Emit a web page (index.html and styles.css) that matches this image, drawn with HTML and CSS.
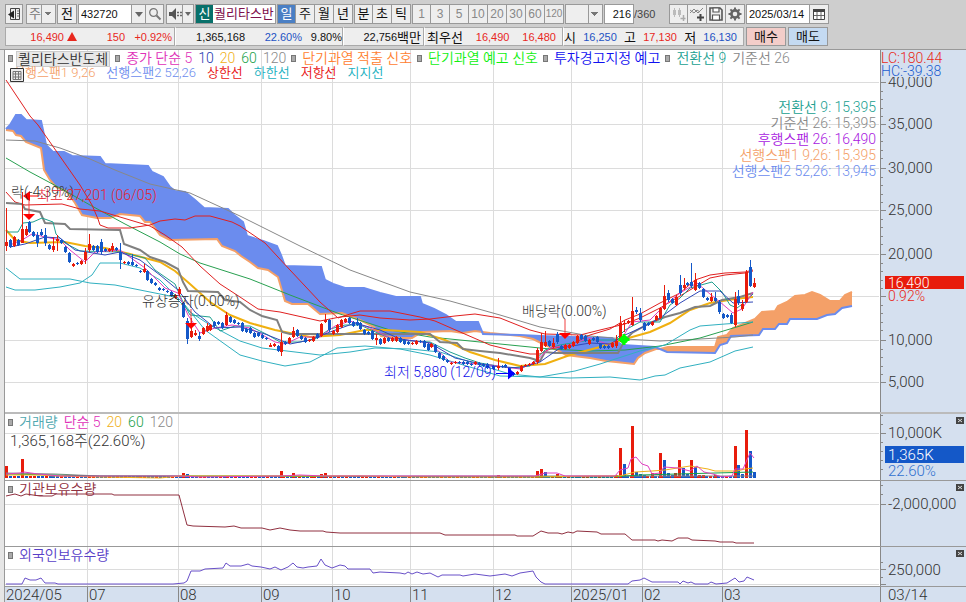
FILE: index.html
```
<!DOCTYPE html>
<html lang="ko">

<head>
  <meta charset="UTF-8">
  <meta name="viewport" content="width=device-width, initial-scale=1.0">
  <title>퀄리타스반도체 차트</title>
  <link rel="stylesheet" href="styles.css">
</head>

<body>
  <header class="toolbar">
    <button class="btn" type="button" aria-label="메뉴 접기">
      <svg width="14" height="14" viewBox="0 0 14 14"><path d="M3.500 1.500h9v11h-9z" fill="#eee" stroke="#444"/><path d="M8 1h1v12H8z" fill="#444"/><path d="M10 4h2M10 6.500h2M10 9h2" stroke="#777"/><path d="M7 3.500v8l-6-4z" fill="#222"/></svg>
    </button>
    <select class="select period" aria-label="종목 구분"><option>주</option></select>
    <button class="btn before" type="button">전</button>
    <div class="group">
      <input class="field code" type="text" value="432720" aria-label="종목코드">
      <button class="btn slim" type="button" aria-label="종목 목록"><span class="arrow"></span></button>
      <button class="btn" type="button" aria-label="검색">
        <svg width="14" height="14" viewBox="0 0 14 14"><circle cx="5.500" cy="5.500" r="3.800" fill="none" stroke="#777" stroke-width="1.300"/><path d="M8.500 8.500l4 4" stroke="#777" stroke-width="2"/></svg>
      </button>
    </div>
    <div class="group sound-group">
      <button class="btn sound" type="button" aria-label="소리">
        <svg width="14" height="14" viewBox="0 0 14 14"><path d="M1 5h3l4-4v12L4 9H1z" fill="#555"/><path d="M9 5.500h2M12 5.500h2M9 8.500h2M12 8.500h2" stroke="#666" stroke-width="1.500"/></svg>
      </button>
      <button class="btn tiny" type="button" aria-label="소리 설정"><span class="arrow"></span></button>
    </div>
    <div class="stock"><span class="badge">신</span><span class="stock-name">퀄리타스반</span></div>
    <div class="group">
      <button class="btn wide active" type="button">일</button>
      <button class="btn wide" type="button">주</button>
      <button class="btn wide" type="button">월</button>
      <button class="btn wide" type="button">년</button>
    </div>
    <div class="group">
      <button class="btn wide" type="button">분</button>
      <button class="btn wide" type="button">초</button>
      <button class="btn wide" type="button">틱</button>
    </div>
    <div class="group minutes">
      <button class="btn wide" type="button">1</button>
      <button class="btn wide" type="button">3</button>
      <button class="btn wide" type="button">5</button>
      <button class="btn wide" type="button">10</button>
      <button class="btn wide" type="button">20</button>
      <button class="btn wide" type="button">30</button>
      <button class="btn wide" type="button">60</button>
      <button class="btn wide small" type="button">120</button>
    </div>
    <select class="select unit" aria-label="사용자 주기" disabled><option></option></select>
    <div class="count">
      <input class="field bars" type="text" value="216" aria-label="봉 개수"><span>/360</span>
    </div>
    <div class="group">
      <button class="btn wide" type="button" aria-label="봉 추가" disabled>
        <svg width="16" height="16" viewBox="0 0 16 16"><path d="M3.500 2v9M8.500 2v9" stroke="#bbb"/><path d="M2 4h3v5H2zM7 4h3v5H7z" fill="#bbb"/><path d="M12.500 9v6M9.500 12.500h5" stroke="#aaa" stroke-width="1.500"/></svg>
      </button>
      <button class="btn wide" type="button" aria-label="지표 추가">
        <svg width="16" height="16" viewBox="0 0 16 16"><path d="M1 7l4-4 4 4 5-5M1 4l4 3 3-3 3 2" fill="none" stroke="#888"/><path d="M11.500 8v7M8 11.500h7" stroke="#444" stroke-width="2"/></svg>
      </button>
      <button class="btn wide" type="button" aria-label="저장">
        <svg width="16" height="16" viewBox="0 0 16 16"><path d="M2 2h10l2 2v10H2z" fill="#eee" stroke="#555" stroke-width="1.600"/><path d="M5 2h6v4H5zM4.500 9h7v5h-7z" fill="#fff" stroke="#555" stroke-width="1.200"/></svg>
      </button>
      <button class="btn wide" type="button" aria-label="설정">
        <svg width="16" height="16" viewBox="0 0 16 16"><circle cx="8" cy="8" r="3.600" fill="none" stroke="#666" stroke-width="2.600"/><path d="M8 1.500v3M8 11.500v3M1.500 8h3M11.500 8h3M3.400 3.400l2 2M10.600 10.600l2 2M3.400 12.600l2-2M10.600 5.400l2-2" stroke="#666" stroke-width="2"/></svg>
      </button>
    </div>
    <div class="group">
      <input class="field date" type="text" value="2025/03/14" aria-label="날짜">
      <button class="btn wide" type="button" aria-label="달력">
        <svg width="14" height="14" viewBox="0 0 14 14"><path d="M1.500 2.500h11v10h-11z" fill="#fff" stroke="#444"/><path d="M1 2h12v3H1z" fill="#444"/><path d="M5 5v7M9 5v7M2 8.500h10" stroke="#666"/></svg>
      </button>
    </div>
  </header>

  <section class="quote">
    <div class="cell cell-price up"><span class="n-price">16,490</span><span class="tri"></span><span class="n-diff">150</span><span class="n-rate">+0.92%</span></div>
    <div class="cell cell-volume"><span class="n-volume">1,365,168</span><span class="n-turn down">22.60%</span><span class="n-rate">9.80%</span></div>
    <div class="cell cell-amount">22,756<b>백만</b></div>
    <div class="cell cell-best"><b>최우선</b><span class="up">16,490</span><span class="up">16,480</span></div>
    <div class="cell cell-ohl"><b>시</b><span class="down">16,250</span><b>고</b><span class="up">17,130</span><b>저</b><span class="down">16,130</span></div>
    <button class="order buy" type="button">매수</button>
    <button class="order sell" type="button">매도</button>
  </section>

  <main class="chart">
    <section class="panel panel-price">
      <svg id="price" viewBox="5 50 961 362"></svg>
      <div class="legend">
        <div class="legend-row">
          <i class="mark"></i><span class="name">퀄리타스반도체</span>
          <i class="mark"></i><span class="c-magenta">종가 단순 5</span><span class="c-navy">10</span><span class="c-gold">20</span><span class="c-green">60</span><span class="c-gray">120</span>
          <i class="mark"></i><span class="c-orange">단기과열 적출 신호</span>
          <i class="mark"></i><span class="c-lime">단기과열 예고 신호</span>
          <i class="mark"></i><span class="c-blue">투자경고지정 예고</span>
          <i class="mark"></i><span class="c-teal">전환선 9</span><span class="c-gray">기준선 26</span>
        </div>
        <div class="legend-row second">
          <span class="c-peach">선행스팬1 9,26</span><span class="c-sky">선행스팬2 52,26</span><span class="c-red">상한선</span><span class="c-cyan">하한선</span><span class="c-red">저항선</span><span class="c-cyan">지지선</span>
        </div>
      </div>
      <button class="table-btn" type="button" aria-label="표 보기">
        <svg width="14" height="14" viewBox="0 0 14 14"><path d="M.5.5h13v13H.5z" fill="#eee" stroke="#333"/><path d="M3 3.500h8v8H3zM5.500 3v9M8.500 3v9M3 6h8M3 9h8" fill="none" stroke="#777"/></svg>
      </button>
      <ul class="values">
        <li class="c-teal">전환선 9: 15,395</li>
        <li class="c-gray">기준선 26: 15,395</li>
        <li class="c-violet">후행스팬 26: 16,490</li>
        <li class="c-peach">선행스팬1 9,26: 15,395</li>
        <li class="c-sky">선행스팬2 52,26: 13,945</li>
      </ul>
    </section>

    <section class="panel">
      <svg id="volume" viewBox="5 414 961 66"></svg>
      <div class="legend">
        <div class="legend-row">
          <i class="mark"></i><span class="c-aqua">거래량</span><span class="c-magenta">단순 5</span><span class="c-gold">20</span><span class="c-green">60</span><span class="c-gray">120</span>
        </div>
        <div class="volume-now">1,365,168주(22.60%)</div>
      </div>
    </section>

    <section class="panel">
      <svg id="inst" viewBox="5 481 961 65"></svg>
      <div class="legend">
        <div class="legend-row"><i class="mark"></i><span class="c-maroon">기관보유수량</span></div>
      </div>
    </section>

    <section class="panel">
      <svg id="foreign" viewBox="5 547 961 39"></svg>
      <div class="legend">
        <div class="legend-row"><i class="mark"></i><span class="c-indigo">외국인보유수량</span></div>
      </div>
    </section>

    <section class="panel panel-axis">
      <svg id="axis" viewBox="5 587 961 15"></svg>
    </section>
  </main>

  <script src="chart.js"></script>
</body>

</html>
```
FILE: styles.css
```
* {
  box-sizing: border-box;
}

body {
  margin: 0;
  min-height: 100vh;
  background-color: #cecece;
  color: #111;
  font-family: "Liberation Sans", "Noto Sans CJK KR", sans-serif;
  font-size: 11px;
  overflow-x: hidden;
}

button,
input,
select {
  font: inherit;
  color: inherit;
  margin: 0;
}

/* Toolbar */
.toolbar {
  display: flex;
  gap: 1px;
  padding: 4px 5px 3px;
}

.group,
.count,
.stock {
  display: flex;
  flex: none;
}

.btn {
  display: flex;
  align-items: center;
  justify-content: center;
  flex: none;
  width: 18px;
  height: 20px;
  padding: 0;
  background-color: #eeeeee;
  border: 1px solid #999;
  font-size: 13px;
  line-height: 16px;
}

.btn.wide {
  width: 19px;
}

.group .btn + .btn {
  border-left-width: 0;
}

.btn.slim {
  width: 14px;
  border-left: none;
}

.btn.tiny {
  width: 11px;
}

.btn.before {
  width: 20px;
}

.btn.active {
  background-color: #4a7fc4;
  color: #fff;
}

.minutes .btn {
  color: #888;
  font-size: 12px;
}

.minutes .small {
  font-size: 10px;
}

.arrow {
  border: 4px solid transparent;
  border-top: 5px solid #666;
  border-bottom: none;
}

.tiny .arrow {
  border-width: 4px 3px 0;
}

.select {
  appearance: none;
  flex: none;
  height: 20px;
  padding: 0 2px;
  border: 1px solid #999;
  border-radius: 0;
  font-size: 13px;
  line-height: 16px;
  color: #777;
  background-color: #eee;
  background-image: linear-gradient(#999, #999), linear-gradient(to bottom left, #777 50%, transparent 50%), linear-gradient(to bottom right, #777 50%, transparent 50%);
  background-repeat: no-repeat;
  background-size: 1px 100%, 4px 4px, 4px 4px;
  background-position: right 13px top, right 7px center, right 3px center;
}

.period {
  width: 30px;
  margin-left: 2px;
}

.unit {
  width: 38px;
  opacity: 1;
}

.field {
  height: 20px;
  padding: 0 2px;
  background-color: #fff;
  border: 1px solid #999;
  border-radius: 0;
}

.code {
  width: 54px;
}

.sound-group {
  margin-left: 1px;
}

.sound {
  width: 17px;
}

.stock {
  width: 81px;
  background-color: #fff;
  border: 1px solid #999;
  overflow: hidden;
  white-space: nowrap;
  font-size: 13px;
  line-height: 18px;
}

.badge {
  width: 17px;
  flex: none;
  text-align: center;
  background-color: #08706a;
  color: #fff;
}

.stock-name {
  padding-left: 1px;
  color: #80104c;
}

.count {
  align-items: center;
  width: 64px;
  color: #444;
}

.bars {
  width: 30px;
  text-align: right;
  color: #111;
}

.date {
  width: 64px;
}

.date + .btn {
  border-left: none;
}

/* Quote line */
.quote {
  display: flex;
  height: 23px;
  padding: 0 5px 3px;
  border-bottom: 1px solid #999;
}

.cell {
  display: flex;
  align-items: center;
  flex: none;
  height: 19px;
  background-color: #eee;
  border: 1px solid #aaa;
  border-left-color: #fff;
  white-space: nowrap;
}

.cell b,
.order {
  font-size: 13px;
  font-weight: 400;
}

.up {
  color: #e8281e;
}

.down {
  color: #2453c4;
}

.cell span {
  text-align: right;
}

.cell-price {
  width: 170px;
  border-left-color: #aaa;
}

.cell-volume {
  width: 168px;
}

.cell-amount {
  width: 81px;
  justify-content: flex-end;
  padding-right: 2px;
}

.cell-best {
  width: 139px;
  padding-left: 2px;
  justify-content: space-between;
  padding-right: 6px;
}

.cell-ohl {
  width: 181px;
  justify-content: space-between;
  padding-right: 6px;
}

.n-price {
  width: 58px;
}

.tri {
  margin-left: 3px;
  border: 5px solid transparent;
  border-top: none;
  border-bottom: 9px solid #e8281e;
}

.n-diff {
  width: 48px;
}

.n-rate {
  width: 47px;
}

.n-volume {
  width: 69px;
}

.n-turn {
  width: 57px;
}

.cell-volume .n-rate {
  width: 40px;
}

.order {
  flex: none;
  width: 40px;
  height: 19px;
  margin-left: 2px;
  padding: 0;
  border: 1px solid #999;
  line-height: 16px;
}

.buy {
  background-color: #f3cdc9;
}

.sell {
  background-color: #c4daf2;
}

/* Chart */
.chart {
  margin-left: 4px;
  border-left: 1px solid #999;
  box-shadow: -4px 0 #e6e6e6;
  background-color: #fff;
  font-family: Roboto, "Noto Sans CJK KR", sans-serif;
  font-size: 14px;
}

.panel {
  display: grid;
  border-bottom: 1px solid #999;
}

.panel-price {
  border-bottom: 2px solid #bbb;
}

.panel-axis {
  border-bottom: none;
}

.panel > * {
  grid-area: 1 / 1;
}

.panel > svg {
  display: block;
  width: 100%;
  height: auto;
}

.legend {
  height: 0;
  padding: 1px 0 0 3px;
  font-weight: 350;
  white-space: nowrap;
}

.legend-row {
  display: flex;
  align-items: center;
  gap: 6px;
  height: 15px;
  line-height: 15px;
}

.second {
  padding-left: 5px;
  gap: 11px;
  height: 12px;
  font-size: 13px;
}

.mark {
  flex: none;
  width: 5px;
  height: 7px;
  margin-left: -1px;
  background-color: #aaa;
  border: 1px solid #777;
}

.mark:first-child {
  margin-left: 0;
}

.name {
  margin-left: -3px;
  padding: 0 1px;
  background-color: #e8e8e8;
  border: 1px solid #ccc;
  line-height: 14px;
  color: #333;
}

.table-btn {
  align-self: start;
  justify-self: start;
  margin: 18px 0 0 5px;
  padding: 0;
  height: 14px;
  border: none;
  background: none;
}

.table-btn svg {
  display: block;
}

.values {
  align-self: start;
  justify-self: end;
  margin: 49px 90px 0 0;
  padding: 0;
  list-style: none;
  text-align: right;
  font-weight: 350;
  line-height: 16px;
}

.volume-now {
  padding-left: 2px;
  font-size: 15px;
  font-weight: 300;
  line-height: 22px;
  color: #333;
}

.c-magenta { color: #e030b8; }
.c-navy { color: #2438b0; }
.c-gold { color: #f0b018; }
.c-green { color: #18a048; }
.c-gray { color: #888888; }
.c-orange { color: #ff8030; }
.c-lime { color: #10f010; }
.c-blue { color: #1010f0; }
.c-teal { color: #20a090; }
.c-peach { color: #f4a068; }
.c-sky { color: #6b8cee; }
.c-red { color: #e81010; }
.c-cyan { color: #18b0c0; }
.c-violet { color: #a818e0; }
.c-aqua { color: #50a8b0; }
.c-maroon { color: #903040; }
.c-indigo { color: #5840c8; }

/* Chart shapes */
.grid { stroke: #dcdcdc; fill: none; shape-rendering: crispEdges; }
.scale-bg { fill: #d5e0ef; }
.tick { stroke: #888; fill: none; shape-rendering: crispEdges; }
.line { fill: none; stroke-width: 1; }
.thick { stroke-width: 2; }
.bar { shape-rendering: crispEdges; }
.scale-text { font-size: 15px; font-weight: 300; }
.note { font-size: 14px; font-weight: 300; }
```
FILE: chart.js
```
const NS = 'http://www.w3.org/2000/svg';
const RED = '#e81c0c';
const BLUE = '#1458c8';
const months = [[87, '07'], [178, '08'], [261, '09'], [332, '10'], [410, '11'], [493, '12'], [571, '2025/01'], [642, '02'], [722, '03']];

function add(svg, tag, attrs, text) {
  const el = document.createElementNS(NS, tag);
  for (const key in attrs) el.setAttribute(key, attrs[key]);
  if (text) el.textContent = text;
  svg.appendChild(el);
}

function line(svg, points, color, thick) {
  add(svg, 'polyline', { points: points, stroke: color, class: thick ? 'line thick' : 'line' });
}

function rect(svg, x, y, w, h, color) {
  add(svg, 'rect', { x: x, y: y, width: w, height: h, fill: color, class: 'bar' });
}

function label(svg, x, y, text, cls, color, anchor) {
  const attrs = { x: x, y: y, class: cls, fill: color || '#333' };
  if (anchor) attrs['text-anchor'] = anchor;
  add(svg, 'text', attrs, text);
}

// Grid, right scale background and the small close box of a panel
function base(id, top, bottom, rows, ticks, box) {
  const svg = document.getElementById(id);
  add(svg, 'path', { d: months.map(m => `M${m[0] + 0.5} ${top}V${bottom}`).join('') + rows.map(y => `M5 ${y + 0.5}H879`).join(''), class: 'grid' });
  add(svg, 'rect', { x: 880, y: top, width: 86, height: bottom - top, class: 'scale-bg' });
  add(svg, 'path', { d: `M880.5 ${top}V${bottom}` + rows.map(y => `M881 ${y + 0.5}h5`).join('') + ticks.map(y => `M881 ${y + 0.5}h2`).join(''), class: 'tick' });
  if (box) {
    rect(svg, 956, box, 8, 7, '#444');
    add(svg, 'path', { d: `M958 ${box + 2}l4 3M962 ${box + 2}l-4 3`, stroke: '#ddd' });
  }
  return svg;
}

// Price panel
const priceRows = [82, 124, 168, 210, 254, 296, 340, 382];
const priceTicks = [];
priceRows.forEach(y => { for (let k = 1; k < 5; k++) priceTicks.push(Math.round(y + k * 8.6)); });
const price = base('price', 50, 412, priceRows, priceTicks.filter(y => y < 378));

const span2a = '6,129 10,125 16,115 21,115 26,120 41,121 43,130 46,145 53,152 64,152 72,156 100,157 105,164 148,166 152,172 163,177 170,187 175,191 185,192 195,200 204,208 228,209 234,215 243,222 247,236 263,241 277,246 281,255 285,266 321,267 325,280 333,284 345,288 364,288 380,293 396,297 420,297 422,304 434,309 446,315 456,322 478,322 483,334 520,335';
const span1a = '6,130 13,131 16,135 21,136 26,142 41,148 44,170 50,180 56,187 66,191 75,203 82,215 97,218 110,218 120,214 140,216 145,222 150,222 160,235 170,240 217,239 222,246 235,251 241,256 250,262 258,268 268,270 278,277 285,301 292,304 308,304 320,314 342,313 360,320 374,327 381,336 400,338 412,338 422,332 450,331 463,333 475,331 490,333 520,336';
const span2b = '520,335 540,336 570,337 612,338 622,345 655,347 660,349';
const span1b = '520,336 533,339 545,345 557,350 566,355 590,358 606,361 616,362 634,364 638,358 645,353 656,349 660,349';
const span1c = '660,349 668,347 715,347 718,337 727,335 733,328 755,319 762,312 775,311 778,306 787,302 795,296 805,295 812,292 820,295 830,301 840,301 845,295 852,292';
const span2c = '660,349 667,352 715,353 720,345 727,343 731,336 759,335 763,329 775,329 779,324 787,324 790,319 817,319 827,315 835,314 842,308 852,306';

function cloud(a, b, color) {
  add(price, 'polygon', { points: a + ' ' + b.split(' ').reverse().join(' '), fill: color });
}
cloud(span2a, span1a, '#6b8cee');
cloud(span2b, span1b, '#6b8cee');
cloud(span1c, span2c, '#f4a068');
[span1a, span1b, span1c].forEach(p => line(price, p, '#f4a068', true));
[span2a, span2b, span2c].forEach(p => line(price, p, '#6b8cee', true));

line(price, '6,140 35,141 60,148 90,159 115,170 150,184 190,193 240,216 300,246 350,270 410,292 450,301 500,315 540,327 590,336 625,339 660,341 700,339 735,337 753,335', '#888');
line(price, '6,158 30,172 60,188 90,205 125,224 160,242 180,254 200,263 250,279 290,295 340,314 390,330 430,337 490,343 550,349 590,351 625,350 660,346 700,338 740,326 753,322', '#28a050');
line(price, '6,80 20,101 30,116 38,125 52,145 66,165 80,185 92,205 98,219 100,225 108,228 130,228 150,225 160,221 175,219 185,220 195,216 210,216 232,222 240,226 265,243 290,270 320,302 338,318 350,314 360,311 390,311 420,317 435,321 490,345 510,350 530,354 540,354 550,349 570,345 590,335 610,329 625,320 640,314 660,303 680,293 695,280 710,275 725,273 745,272 753,270', '#e02020');
line(price, '6,192 15,202 25,205 62,204 80,209 100,211 120,217 150,226 165,235 182,247 200,266 220,284 240,297 258,309 280,312 320,321 340,317 360,315 380,318 410,320 430,319 455,316 475,314 500,318 510,322 530,330 545,334 580,335 600,330 625,324 640,318 660,308 690,290 710,278 725,275 745,273 753,271', '#e02020');
line(price, '6,268 20,279 70,279 90,283 115,285 150,292 175,297 190,312 210,325 240,341 262,348 320,355 350,352 375,348 410,349 440,352 470,362 490,368 510,374 540,377 570,378 610,377 640,380 655,376 665,375 680,368 710,362 735,351 753,347', '#30b0c0');
line(price, '6,287 15,290 35,290 60,287 80,283 92,275 100,263 120,263 140,268 160,280 185,305 205,330 240,355 262,361 285,366 310,362 337,348 365,346 400,349 430,355 460,364 490,373 500,376 540,377 575,371 600,364 640,351 665,345 690,330 700,326 725,324 753,322', '#30b0c0');
line(price, '6,230 15,240 30,243 65,242 85,246 105,248 130,254 160,262 175,271 190,284 210,302 230,315 250,323 275,330 310,337 340,335 365,330 385,330 420,332 445,340 470,352 495,360 520,366 545,364 570,355 600,347 625,339 650,332 670,323 690,310 710,303 735,299 753,297', '#f0b010', true);
line(price, '6,203 22,204 25,209 40,212 45,223 65,224 70,229 120,230 124,244 140,250 150,257 165,262 178,269 183,282 188,291 218,292 225,300 240,302 250,310 262,316 277,320 282,332 290,334 430,334 440,342 457,343 463,349 480,351 500,353 530,358 540,361 545,352 555,353 618,353 625,340 632,333 650,323 665,317 680,313 695,307 710,306 722,300 740,297 753,293', '#808080', true);
line(price, '6,232 18,232 23,223 33,222 42,218 53,222 56,234 65,243 80,251 120,252 145,258 155,270 175,284 182,300 190,315 210,317 220,331 235,326 250,326 268,335 280,342 300,342 315,339 330,329 345,325 360,325 380,334 395,340 430,342 450,352 465,358 480,363 510,368 530,366 545,350 560,345 590,340 615,340 625,330 640,322 660,322 670,305 680,298 690,288 712,282 722,292 730,305 737,308 745,302 753,294', '#20a090');
line(price, '10,245 22,240 32,234 50,238 60,240 70,250 85,262 95,252 120,250 145,268 165,288 178,293 188,315 200,333 215,328 232,325 250,328 275,342 285,344 300,337 320,337 335,326 350,321 370,328 390,338 430,343 450,362 490,365 520,369 535,362 550,348 570,345 590,338 610,345 622,338 632,322 650,320 665,305 680,293 697,283 710,294 720,302 733,313 742,309 753,292', '#e040c0');
line(price, '10,247 25,244 45,237 60,238 75,250 105,255 120,252 140,260 160,275 178,290 195,312 215,328 240,327 265,334 290,344 310,340 330,332 355,323 380,330 400,339 430,343 455,358 490,366 520,368 540,362 560,348 590,343 610,344 625,335 645,326 660,318 680,303 700,291 720,291 733,303 753,302', '#3048b8');

// x,top,bottom[,high,low]
const up = '6,242,246,208,251 14,237,246 22,229,243,192,243 26,229,235,226,236 53,246,250,237,252 57,239,241,235,251 73,264,266 81,261,264 85,252,260,248,264 89,244,250,234,252 109,249,251 112,246,250,243,252 124,262,263 144,269,272,264,273 175,295,298 179,289,294,287,296 191,331,337,318,338 195,333,335,330,336 203,328,334 207,326,331,323,332 210,325,330 226,315,325,312,326 270,345,347,343,347 274,344,346 281,342,352,333,356 289,338,343 293,331,337,327,338 309,340,341 313,337,341 321,324,336,323,337 325,320,322,314,323 333,331,334 337,325,332 341,320,327 345,319,322 376,338,340,334,345 384,338,343 392,338,341 396,337,341 412,343,344 416,341,344 431,344,347 451,363,364 455,362,363 475,362,364 498,366,368,358,370 517,372,374 521,366,371 525,365,366 529,364,365 533,362,364 537,350,362,348,364 541,342,351,333,352 545,342,346,331,347 553,343,347,338,348 565,345,349 569,345,348 573,342,346 577,336,343 589,340,344 612,343,347 616,341,346,335,348 620,323,340,316,342 624,323,324,320,332 628,321,323 632,311,325,297,326 652,322,325 656,316,320 660,308,318 664,296,309,285,310 676,297,305,295,306 684,285,288,278,290 695,280,290,273,291 711,297,301,293,302 735,299,325,292,327 742,304,309,300,311 746,272,302,270,303 754,283,287,278,288';
const down = '10,240,247 18,240,245 29,222,232 33,232,236 37,235,243,232,247 41,232,235,229,236 45,235,243,228,246 49,245,249 61,240,243 65,247,252 69,253,262 77,263,264 93,246,250 97,246,252 101,242,252,239,254 105,249,251 116,248,250 120,252,260,243,269 128,262,264 132,262,265,254,266 136,265,266 140,271,272 147,271,280 151,279,283 155,283,285 159,288,290 163,289,290 167,291,292 171,292,296 183,303,317 187,321,339,318,344 199,336,339,332,341 214,322,326 218,322,324 222,323,328 230,317,322 234,320,323 238,323,324 242,323,331 246,329,332 250,328,333 254,333,337 258,333,336 262,335,338 266,338,339 278,346,351 285,342,344 297,330,336 301,336,339 305,338,342 317,334,338 329,320,330,319,332 349,318,323 353,322,326 357,322,325,318,326 360,323,329 364,330,334 368,332,334 372,331,339 380,339,344 388,338,341 400,338,342 404,340,344 408,342,344 420,341,342 424,341,347 428,344,350 435,345,352 439,353,358 443,356,360 447,360,362 459,362,363 463,362,364 467,362,364 471,364,365 479,363,365 483,364,366 487,364,368 493,366,369 502,366,367 505,365,367 509,368,376 513,373,375 549,341,346 557,334,342,332,344 561,346,349 581,335,339 585,336,341 593,338,340 597,337,342 600,344,348 604,346,348 608,346,348 636,310,312,307,314 640,313,320,308,322 644,323,330 648,323,325 668,293,300,290,302 672,299,303 680,285,293,275,295 687,283,285 691,282,286,263,288 699,283,288 703,289,297 707,298,300 715,298,301,292,302 719,302,312,300,314 723,314,318 727,315,317 731,315,323,313,324 738,296,303,290,305 750,267,286,260,287';

function candles(data, color) {
  data.split(' ').forEach(item => {
    const [x, top, bottom, high, low] = item.split(',').map(Number);
    const h = high || top - 1;
    rect(price, x, h, 1, (low || bottom + 1) - h, color);
    rect(price, x - 1, top, 3, Math.max(bottom - top, 1), color);
  });
}
candles(up, RED);
candles(down, BLUE);

// Signals and notes
function arrowDown(x, top, tip) {
  add(price, 'path', { d: `M${x} ${top}V${tip - 5}`, stroke: '#f04040' });
  add(price, 'path', { d: `M${x - 6} ${tip - 6}h12l-6 6z`, fill: '#f00' });
}
arrowDown(29, 196, 220);
arrowDown(191, 309, 329);
arrowDown(565, 319, 339);
add(price, 'path', { d: 'M23 196l7-5v10zM30 195.5h8v1h-8z', fill: '#f00' });
add(price, 'path', { d: 'M515 373.500l-7-6v12zM496 373h12v1h-12z', fill: '#00f' });
add(price, 'circle', { cx: 624, cy: 339.5, r: 4, fill: '#0f0' });
add(price, 'path', { d: 'M624 334v11M618.500 339.500h11', stroke: '#0f0', 'stroke-width': 3 });

label(price, 74, 197, '락(-4.39%)', 'note', '#333', 'end');
label(price, 37, 200, '최고 27,201 (06/05)', 'note', '#e82030');
label(price, 142, 306, '유상증자(0.00%)', 'note');
label(price, 522, 316, '배당락(0.00%)', 'note');
label(price, 384, 377, '최저 5,880 (12/09)', 'note', '#1010e8');

// Price scale
['40,000', '35,000', '30,000', '25,000', '20,000', '', '10,000', '5,000'].forEach((t, i) => {
  if (t) label(price, 888, priceRows[i] + 5, t, 'scale-text');
});
rect(price, 881, 50, 85, 27, '#d5e0ef');
label(price, 881, 63, 'LC:180.44', 'note', '#e82818');
label(price, 881, 76, 'HC:-39.38', 'note', '#1c5cd0');
rect(price, 885, 276, 79, 13, RED);
label(price, 888, 288, '16,490', 'note', '#fff');
label(price, 888, 301, '0.92%', 'note', '#e82818');

// Volume panel
const volume = base('volume', 414, 480, [433], [415, 424, 442, 451, 460, 469], 417);
const volUp = { 6: 466, 22: 459, 183: 473, 281: 471, 293: 473, 321: 474, 325: 473, 498: 475, 537: 471, 541: 469, 557: 474, 616: 475, 620: 448, 632: 426, 652: 473, 660: 453, 675: 473, 679: 460, 691: 460, 699: 475, 703: 475, 715: 475, 735: 446, 746: 430 };
const volDown = { 187: 474, 545: 472, 624: 464, 636: 472, 640: 474, 644: 475, 664: 460, 668: 473, 672: 475, 683: 468, 687: 474, 695: 467, 738: 465, 742: 474, 750: 451, 754: 472 };
for (let i = 0; i < 189; i++) rect(volume, Math.round(5 + i * 3.955), 476, 3, 2, i % 4 === 2 || i % 7 === 0 ? RED : BLUE);
for (const x in volUp) rect(volume, x - 1, volUp[x], 3, 478 - volUp[x], RED);
for (const x in volDown) rect(volume, x - 1, volDown[x], 3, 478 - volDown[x], BLUE);
line(volume, '6,473 55,474 100,476 260,476 753,476', '#888');
line(volume, '6,474 100,476 610,477 640,475 753,472', '#18a048');
line(volume, '6,475 40,475 55,476 100,477 160,478 180,476 320,476 360,476 420,477 530,477 600,476 620,476 635,472 652,471 665,470 690,466 708,469 715,471 737,471 745,469 753,468', '#f0b018');
line(volume, '6,474 20,473 24,472 38,474 60,476 180,476 200,477 280,476 300,475 325,476 535,476 545,473 557,473 565,476 615,476 620,470 628,468 631,459 636,457 642,464 648,466 652,474 660,473 664,467 678,468 690,471 697,466 704,472 713,474 722,477 732,476 735,469 743,469 750,453 754,458', '#e040c0');
label(volume, 888, 438, '10,000K', 'scale-text');
rect(volume, 885, 446, 79, 17, '#1458c8');
label(volume, 888, 460, '1,365K', 'scale-text', '#fff');
label(volume, 888, 476, '22.60%', 'scale-text', '#3070d0');

// Institution holdings
const inst = base('inst', 481, 546, [504], [485, 494], 484);
line(inst, '6,496 15,494 21,496 26,494 40,496 52,496 56,494 112,494 114,495 179,495 187,525 193,526 225,527 234,526 241,528 262,528 270,530 280,528 290,530 300,531 323,531 326,532 340,533 440,533 445,535 515,535 517,536 533,536 541,531 548,533 558,533 562,534 568,532 573,533 577,531 597,532 601,534 625,534 632,540 655,540 658,541 662,540 672,541 678,538 688,538 692,540 715,541 720,542 733,542 736,543 754,543', '#903040');
label(inst, 888, 509, '-2,000,000', 'scale-text');

// Foreign holdings
const foreign = base('foreign', 547, 586, [569, 584], [562, 577], 550);
line(foreign, '6,584 22,584 25,578 30,580 36,580 41,578 45,583 55,583 58,584 173,584 184,583 187,581 191,571 200,571 205,569 223,568 226,563 230,566 241,566 248,564 252,566 261,567 270,569 275,567 281,570 288,567 293,563 297,567 303,568 308,567 317,566 321,559 325,565 332,568 340,565 345,566 348,569 367,569 370,569 373,573 380,572 400,573 405,574 408,572 412,574 417,572 423,574 430,573 438,577 442,575 460,575 463,576 475,574 490,576 505,574 512,576 520,573 533,571 536,577 541,582 545,584 628,584 632,581 640,580 644,578 652,582 678,582 680,584 683,581 688,583 691,582 695,584 708,584 711,582 716,584 727,583 735,578 739,582 744,581 747,577 754,580', '#6850c8');
label(foreign, 888, 575, '250,000', 'scale-text');

// Time axis
const axis = document.getElementById('axis');
add(axis, 'rect', { x: 5, y: 587, width: 961, height: 15, class: 'scale-bg' });
add(axis, 'path', { d: months.map(m => `M${m[0] + 0.5} 587V602`).join('') + 'M880.5 587V602', class: 'tick' });
label(axis, 6, 600, '2024/05', 'scale-text');
months.forEach(m => label(axis, m[0] + 2, 600, m[1], 'scale-text'));
label(axis, 888, 600, '03/14', 'scale-text');
```
